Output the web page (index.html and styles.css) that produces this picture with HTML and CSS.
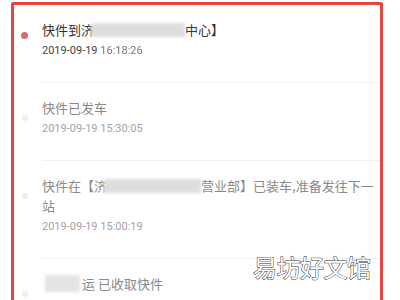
FILE: index.html
```html
<!DOCTYPE html>
<html lang="zh">
<head>
<meta charset="utf-8">
<link rel="stylesheet" href="styles.css">
</head>
<body>
<div class="frame">
  <div class="item active">
    <div class="rail"><span class="dot"></span></div>
    <div class="content">
      <div class="title">快件到济<span class="mask m1"></span>中心】</div>
      <div class="date">2019-09-19 <span class="fade">16:18:26</span></div>
    </div>
  </div>
  <div class="item">
    <div class="rail"><span class="dot"></span></div>
    <div class="content">
      <div class="title">快件已发车</div>
      <div class="date">2019-09-19 15:30:05</div>
    </div>
  </div>
  <div class="item">
    <div class="rail"><span class="dot"></span></div>
    <div class="content">
      <div class="title">快件在【济<span class="mask m3"></span>营业部】已装车,准备发往下一站</div>
      <div class="date">2019-09-19 15:00:19</div>
    </div>
  </div>
  <div class="item">
    <div class="rail"><span class="dot"></span></div>
    <div class="content">
      <div class="title"><span class="mask m4"></span>运 已收取快件</div>
      <div class="date fade">2019-09-19 14:55:02</div>
    </div>
  </div>
</div>
<div class="watermark">易坊好文馆</div>
</body>
</html>
```
FILE: styles.css
```css
html, body {
  margin: 0;
  padding: 0;
  background: #ffffff;
  width: 400px;
  height: 300px;
  overflow: hidden;
  font-family: "Roboto", "Noto Sans CJK SC", sans-serif;
}
.frame {
  margin: 2px 0 0 11px;
  width: 366px;
  height: 320px;
  border: 3px solid #e6463d;
  border-bottom: none;
  border-radius: 3px 3px 0 0;
  background: #fff;
}
.item {
  display: flex;
}
.rail {
  width: 28px;
  flex: none;
}
.dot {
  display: block;
  width: 6px;
  height: 6px;
  border-radius: 50%;
  background: #efefef;
  margin: 32px 0 0 8px;
}
.active .dot {
  width: 7px;
  height: 7px;
  background: #d86a77;
  margin: 27px 0 0 7px;
}
.content {
  flex: 1;
  padding: 15px 0 21px 0;
  border-bottom: 1px solid #f1f1f1;
}
.title {
  font-family: "Noto Sans CJK SC", sans-serif;
  font-size: 13px;
  line-height: 20px;
  color: #8a8a8a;
  padding-right: 2px;
}
.active .title { color: #333; }
.date {
  font-size: 11px;
  line-height: 20px;
  margin-top: 1px;
  color: #a3a3a3;
}
.active .date { color: #444; }
.fade { color: #bbb; filter: blur(0.4px); }
.active .date .fade { color: #777; }
.mask {
  display: inline-block;
  vertical-align: middle;
  height: 14px;
  background: #dedede;
  filter: blur(1.5px);
  margin-top: -3px;
}
.m1 { width: 94px; margin-left: -3px; }
.m3 { width: 97px; margin-left: -3px; }
.m4 { width: 35px; height: 17px; margin-left: 3px; margin-right: 2px; background: #e4e4e4; }
.watermark {
  position: absolute;
  left: 253px;
  top: 252px;
  font-family: "Noto Sans CJK SC", sans-serif;
  font-size: 24px;
  line-height: 30px;
  letter-spacing: -0.5px;
  color: #fff;
  -webkit-text-stroke: 1px #333;
  paint-order: stroke fill;
}
```
